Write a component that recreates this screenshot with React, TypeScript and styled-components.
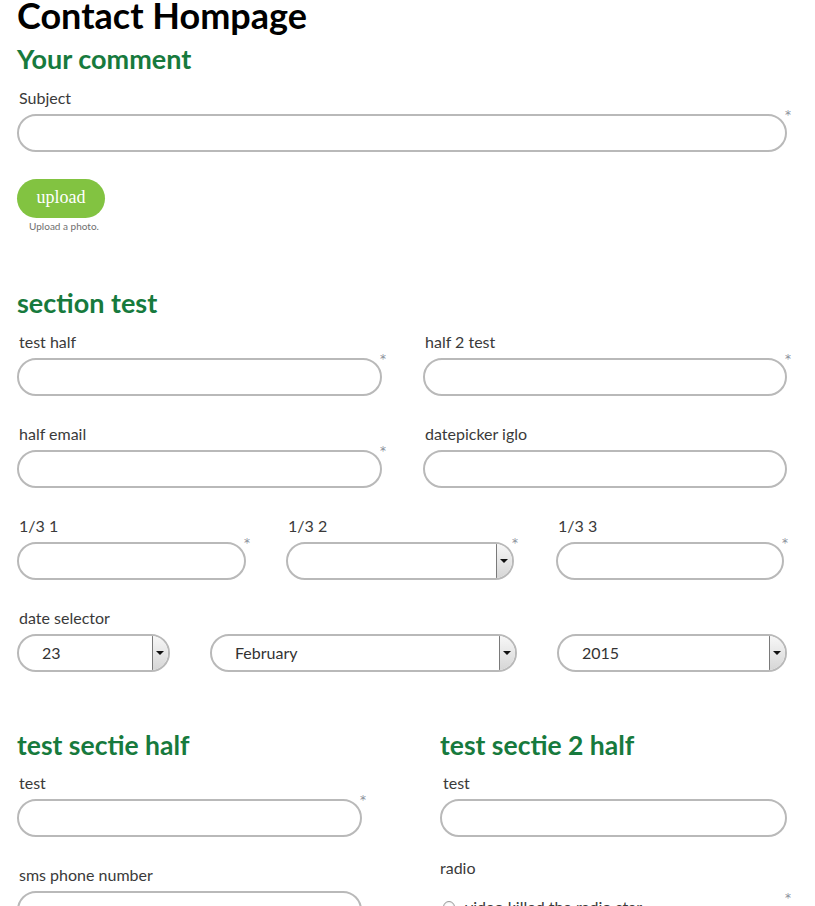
import styled, { createGlobalStyle } from 'styled-components';

const GlobalStyle = createGlobalStyle`
  html, body {
    margin: 0;
    padding: 0;
    overflow: hidden;
    background: #ffffff;
  }
  body {
    font-family: Lato, "Open Sans", "Liberation Sans", sans-serif;
    color: #3a3a3a;
  }
  * {
    box-sizing: border-box;
  }
`;

const Page = styled.div`
  width: 815px;
  padding: 0 28px 0 17px;
`;

const Title = styled.h1`
  margin: 0;
  font-size: 36px;
  line-height: 30px;
  font-weight: 700;
  color: #000000;
`;

const SectionTitle = styled.h2<{ $top: number }>`
  margin: ${p => p.$top}px 0 14px;
  font-size: 27px;
  line-height: 30px;
  font-weight: 700;
  color: #177a3d;
`;

const SubTitle = styled.h3`
  margin: 0 0 13px;
  font-size: 26.5px;
  line-height: 30px;
  font-weight: 700;
  color: #177a3d;
`;

const Field = styled.div<{ $width?: number }>`
  width: ${p => (p.$width ? `${p.$width}px` : '100%')};
  margin-bottom: 28px;
`;

const Label = styled.div<{ $indent?: number }>`
  font-size: 16px;
  line-height: 20px;
  color: #3a3a3a;
  padding-left: ${p => p.$indent ?? 2}px;
  margin-bottom: 6px;
`;

const Box = styled.div`
  position: relative;
`;

const Input = styled.div`
  height: 38px;
  border: 2px solid #b9b9b9;
  border-radius: 19px;
  background: #ffffff;
`;

const Asterisk = styled.span`
  position: absolute;
  right: -4px;
  top: -5px;
  font-family: "DejaVu Sans", sans-serif;
  font-size: 12px;
  line-height: 12px;
  color: #8a8f9a;
`;

const SelectShell = styled.div`
  display: flex;
  height: 38px;
  border: 2px solid #b9b9b9;
  border-radius: 19px;
  overflow: hidden;
  background: #ffffff;
`;

const SelectValue = styled.div`
  flex: 1;
  padding-left: 23px;
  font-size: 16px;
  line-height: 34px;
  color: #333333;
`;

const ArrowBox = styled.div`
  width: 16px;
  display: flex;
  align-items: center;
  justify-content: center;
  border-left: 1px solid #7a7a7a;
  background: linear-gradient(to bottom, #f7f7f7, #d6d6d6);
  padding-right: 2px;

  &::after {
    content: '';
    border-left: 4px solid transparent;
    border-right: 4px solid transparent;
    border-top: 4px solid #111111;
  }
`;

const UploadWrap = styled.div`
  display: inline-flex;
  flex-direction: column;
  align-items: center;
  margin-top: -1px;
`;

const UploadButton = styled.button`
  width: 88px;
  height: 39px;
  border: none;
  border-radius: 20px;
  background: #82c341;
  color: #ffffff;
  font-family: "Liberation Serif", "DejaVu Serif", serif;
  font-size: 18px;
  padding: 0 0 3px;
`;

const Hint = styled.div`
  font-size: 10px;
  line-height: 13px;
  color: #6f6f6f;
  margin-top: 2px;
  padding-left: 6px;
`;

const Halves = styled.div`
  display: grid;
  grid-template-columns: 406px 1fr;
`;

const Thirds = styled.div`
  display: grid;
  grid-template-columns: 269px 270px 1fr;
`;

const DateRow = styled.div`
  display: flex;
  gap: 40px;
`;

const Columns = styled.div`
  display: grid;
  grid-template-columns: 423px 347px;
  margin-top: 30px;
`;

const Column = styled.div``;

const RadioField = styled.div`
  margin-top: -7px;
`;

const RadioItem = styled.label`
  display: flex;
  align-items: center;
  gap: 10px;
  font-size: 16px;
  line-height: 20px;
  color: #3a3a3a;
  padding-left: 3px;
  margin-top: 19px;
`;

const RadioDot = styled.span`
  width: 12px;
  height: 12px;
  border-radius: 50%;
  border: 1px solid #9a9a9a;
  background: radial-gradient(circle, #ffffff 40%, #e4e4e4 100%);
`;

type TextFieldProps = {
  label: string;
  required?: boolean;
  width?: number;
  indent?: number;
};

const TextField = ({ label, required, width, indent }: TextFieldProps) => (
  <Field $width={width}>
    <Label $indent={indent}>{label}</Label>
    <Box>
      <Input />
      {required && <Asterisk>*</Asterisk>}
    </Box>
  </Field>
);

type SelectFieldProps = {
  label?: string;
  value?: string;
  required?: boolean;
  width: number;
};

const SelectField = ({ label, value, required, width }: SelectFieldProps) => (
  <Field $width={width}>
    {label !== undefined && <Label>{label}</Label>}
    <Box>
      <SelectShell>
        <SelectValue>{value}</SelectValue>
        <ArrowBox />
      </SelectShell>
      {required && <Asterisk>*</Asterisk>}
    </Box>
  </Field>
);

const App = () => {
  return (
    <>
      <GlobalStyle />
      <Page>
        <Title>Contact Hompage</Title>

        <SectionTitle $top={14}>Your comment</SectionTitle>
        <TextField label="Subject" required />
        <UploadWrap>
          <UploadButton>upload</UploadButton>
          <Hint>Upload a photo.</Hint>
        </UploadWrap>

        <SectionTitle $top={55}>section test</SectionTitle>
        <Halves>
          <TextField label="test half" required width={365} />
          <TextField label="half 2 test" required width={364} />
          <TextField label="half email" required width={365} />
          <TextField label="datepicker iglo" width={364} />
        </Halves>
        <Thirds>
          <TextField label="1/3 1" required width={229} />
          <SelectField label="1/3 2" required width={228} />
          <TextField label="1/3 3" required width={228} />
        </Thirds>

        <Label>date selector</Label>
        <DateRow>
          <SelectField value="23" width={153} />
          <SelectField value="February" width={307} />
          <SelectField value="2015" width={230} />
        </DateRow>

        <Columns>
          <Column>
            <SubTitle>test sectie half</SubTitle>
            <TextField label="test" required width={345} />
            <TextField label="sms phone number" width={345} />
          </Column>
          <Column>
            <SubTitle>test sectie 2 half</SubTitle>
            <TextField label="test" width={347} indent={3} />
            <RadioField>
              <Label $indent={0}>radio</Label>
              <Box>
                <RadioItem>
                  <RadioDot />
                  video killed the radio star
                </RadioItem>
                <Asterisk>*</Asterisk>
              </Box>
            </RadioField>
          </Column>
        </Columns>
      </Page>
    </>
  );
};

export default App;
